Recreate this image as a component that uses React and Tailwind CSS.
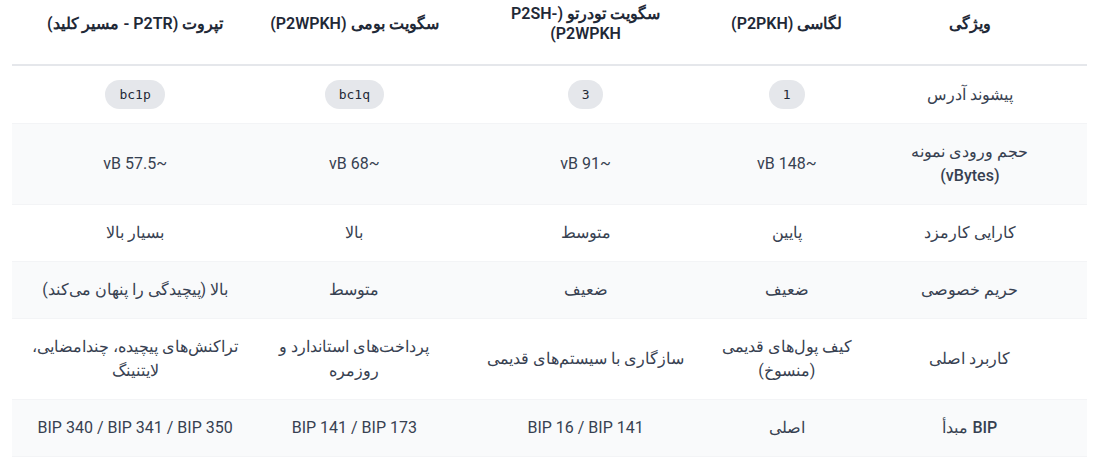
const headers = [
  'ویژگی',
  'لگاسی (P2PKH)',
  'سگویت تودرتو (P2SH-P2WPKH)',
  'سگویت بومی (P2WPKH)',
  'تپروت (P2TR - مسیر کلید)',
]

// column widths and horizontal padding, right to left
const cols = [
  { w: 'w-[234px]', px: 'px-10', hpx: 'px-4' },
  { w: 'w-[132px]', px: 'px-0', hpx: 'px-0' },
  { w: 'w-[270px]', px: 'px-6', hpx: 'px-[40px]' },
  { w: 'w-[192px]', px: 'px-4', hpx: 'px-0' },
  { w: 'w-[246px]', px: 'px-4', hpx: 'px-2' },
]

const rows = [
  { label: 'پیشوند آدرس', cells: ['1', '3', 'bc1q', 'bc1p'], code: true },
  { label: 'حجم ورودی نمونه (vBytes)', cells: ['~148 vB', '~91 vB', '~68 vB', '~57.5 vB'] },
  { label: 'کارایی کارمزد', cells: ['پایین', 'متوسط', 'بالا', 'بسیار بالا'] },
  { label: 'حریم خصوصی', cells: ['ضعیف', 'ضعیف', 'متوسط', 'بالا (پیچیدگی را پنهان می‌کند)'] },
  {
    label: 'کاربرد اصلی',
    cells: [
      'کیف پول‌های قدیمی (منسوخ)',
      'سازگاری با سیستم‌های قدیمی',
      'پرداخت‌های استاندارد و روزمره',
      'تراکنش‌های پیچیده، چندامضایی، لایتنینگ',
    ],
  },
  { label: 'BIP مبدأ', cells: ['اصلی', 'BIP 16 / BIP 141', 'BIP 141 / BIP 173', 'BIP 340 / BIP 341 / BIP 350'] },
]

export default function App() {
  return (
    <div className="bg-white px-3 font-['Roboto',sans-serif]" dir="rtl">
      <table className="w-full table-fixed border-collapse text-center text-base leading-6">
        <thead>
          <tr className="border-b-2 border-[#e5e7eb]">
            {headers.map((h, i) => (
              <th
                key={i}
                className={`${cols[i].w} ${cols[i].hpx} pt-1 pb-[20px] align-middle font-semibold leading-5 text-[#1f2937]`}
              >
                {h}
              </th>
            ))}
          </tr>
        </thead>
        <tbody>
          {rows.map((r, ri) => (
            <tr
              key={ri}
              className={`border-b border-[#f3f4f6] ${ri % 2 === 1 ? 'bg-[#f9fafb]' : 'bg-white'}`}
            >
              <td className={`${cols[0].px} py-4 font-medium text-[#374151]`}>{r.label}</td>
              {r.cells.map((c, ci) => (
                <td key={ci} className={`${cols[ci + 1].px} py-4 text-[#374151]`}>
                  {r.code ? (
                    <code className="rounded-full bg-[#e5e7eb] px-[14px] py-[7px] font-['DejaVu_Sans_Mono',monospace] text-[13px] text-[#1f2937]">
                      {c}
                    </code>
                  ) : (
                    c
                  )}
                </td>
              ))}
            </tr>
          ))}
        </tbody>
      </table>
    </div>
  )
}
